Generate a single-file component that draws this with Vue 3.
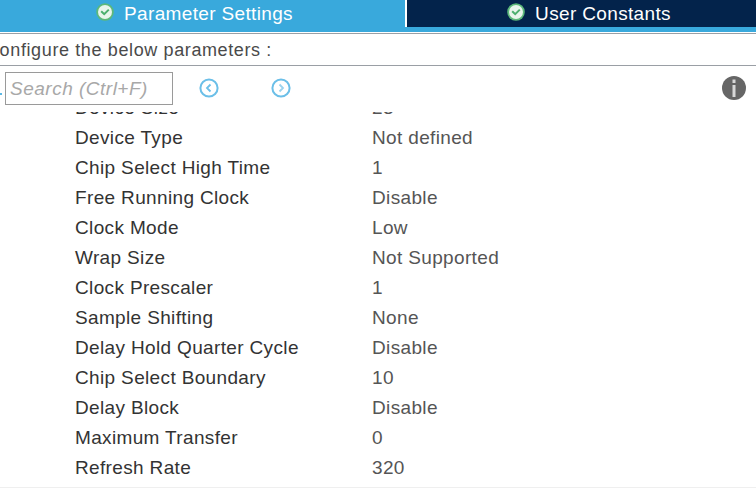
<script setup>
const rows = [
  ['Device Size', '23'],
  ['Device Type', 'Not defined'],
  ['Chip Select High Time', '1'],
  ['Free Running Clock', 'Disable'],
  ['Clock Mode', 'Low'],
  ['Wrap Size', 'Not Supported'],
  ['Clock Prescaler', '1'],
  ['Sample Shifting', 'None'],
  ['Delay Hold Quarter Cycle', 'Disable'],
  ['Chip Select Boundary', '10'],
  ['Delay Block', 'Disable'],
  ['Maximum Transfer', '0'],
  ['Refresh Rate', '320'],
]
</script>

<template>
  <main class="page">
    <div class="tabs">
      <div class="tab tab-active">
        <svg class="check" viewBox="0 0 18 18">
          <circle cx="9" cy="9" r="8.8" fill="#5cb87a" />
          <circle cx="9" cy="9" r="7" fill="#e8f5ec" />
          <path d="M5.2 8.2 L8.2 11.2 L12.8 6.6" fill="none" stroke="#4caf6e" stroke-width="2" />
        </svg>
        <span>Parameter Settings</span>
      </div>
      <div class="tab tab-dark">
        <svg class="check" viewBox="0 0 18 18">
          <circle cx="9" cy="9" r="8.8" fill="#5cb87a" />
          <circle cx="9" cy="9" r="7" fill="#e8f5ec" />
          <path d="M5.2 8.2 L8.2 11.2 L12.8 6.6" fill="none" stroke="#4caf6e" stroke-width="2" />
        </svg>
        <span>User Constants</span>
      </div>
    </div>

    <div class="heading">Configure the below parameters :</div>

    <div class="toolbar">
      <span class="search-tail"></span>
      <div class="search">Search (Ctrl+F)</div>
      <svg class="nav nav-prev" viewBox="0 0 20 20">
        <circle cx="10" cy="10" r="8.6" fill="none" stroke="#6bbfe8" stroke-width="2" />
        <path d="M11.5 6.5 L8 10 L11.5 13.5" fill="none" stroke="#6bbfe8" stroke-width="1.8" />
      </svg>
      <svg class="nav nav-next" viewBox="0 0 20 20">
        <circle cx="10" cy="10" r="8.6" fill="none" stroke="#6bbfe8" stroke-width="2" />
        <path d="M8.5 6.5 L12 10 L8.5 13.5" fill="none" stroke="#9ad3ef" stroke-width="1.8" />
      </svg>
      <svg class="info" viewBox="0 0 24 24">
        <circle cx="12" cy="12" r="12" fill="#666666" />
        <rect x="10.5" y="3.5" width="3" height="3.5" fill="#d8d8d8" />
        <rect x="10.5" y="9" width="3" height="12" fill="#d8d8d8" />
      </svg>
    </div>

    <div class="params">
      <div class="rows">
        <div v-for="row in rows" :key="row[0]" class="row">
          <span class="name">{{ row[0] }}</span>
          <span class="value">{{ row[1] }}</span>
        </div>
      </div>
    </div>
  </main>
</template>

<style scoped>
.page {
  width: 756px;
  height: 488px;
  overflow: hidden;
  display: flex;
  flex-direction: column;
  background: #ffffff;
  font-family: "Liberation Sans", Arial, sans-serif;
}

.tabs {
  display: flex;
  flex: none;
  height: 32px;
  background: #39a9dc;
  align-items: flex-start;
}

.tab {
  display: flex;
  align-items: center;
  justify-content: center;
  gap: 10px;
  height: 27px;
  color: #ffffff;
  font-size: 19px;
  letter-spacing: 0.35px;
  box-sizing: border-box;
}

.tab-active {
  width: 405px;
  padding-right: 16px;
}

.tab-dark {
  width: 349px;
  margin-left: 2px;
  background: #03234b;
  box-shadow: -2px 0 0 #ffffff;
  padding-left: 15px;
}

.check {
  width: 18px;
  height: 18px;
  flex: none;
  margin-top: -3px;
}

.heading {
  flex: none;
  height: 30px;
  margin-top: 1px;
  margin-left: -14px;
  padding-top: 1px;
  border-top: 1px solid #9a9fa5;
  border-bottom: 1px solid #9a9fa5;
  line-height: 31px;
  font-size: 18px;
  letter-spacing: 0.62px;
  color: #4a4a4a;
}

.toolbar {
  flex: none;
  height: 46px;
  display: flex;
  align-items: flex-start;
  position: relative;
}

.search-tail {
  position: absolute;
  left: 0;
  top: 27px;
  width: 2px;
  height: 2px;
  background: #5bb8e4;
}

.search {
  width: 162px;
  height: 31px;
  margin: 6px 0 0 5px;
  padding-left: 4px;
  border: 1px solid #9a9a9a;
  line-height: 31px;
  font-size: 19px;
  font-style: italic;
  letter-spacing: 0.5px;
  color: #a8a8a8;
}

.nav {
  width: 20px;
  height: 20px;
  margin-top: 12px;
  flex: none;
}

.nav-prev {
  margin-left: 26px;
}

.nav-next {
  margin-left: 52px;
}

.info {
  width: 24px;
  height: 24px;
  margin: 10px 10px 0 auto;
  flex: none;
}

.params {
  flex: none;
  height: 375px;
  overflow: hidden;
  border-bottom: 1px solid #efefef;
}

.rows {
  margin-top: -19px;
}

.row {
  display: flex;
  height: 30px;
  align-items: center;
  padding-left: 75px;
  font-size: 19px;
  letter-spacing: 0.35px;
}

.name {
  width: 297px;
  color: #333333;
}

.value {
  color: #555555;
}
</style>
